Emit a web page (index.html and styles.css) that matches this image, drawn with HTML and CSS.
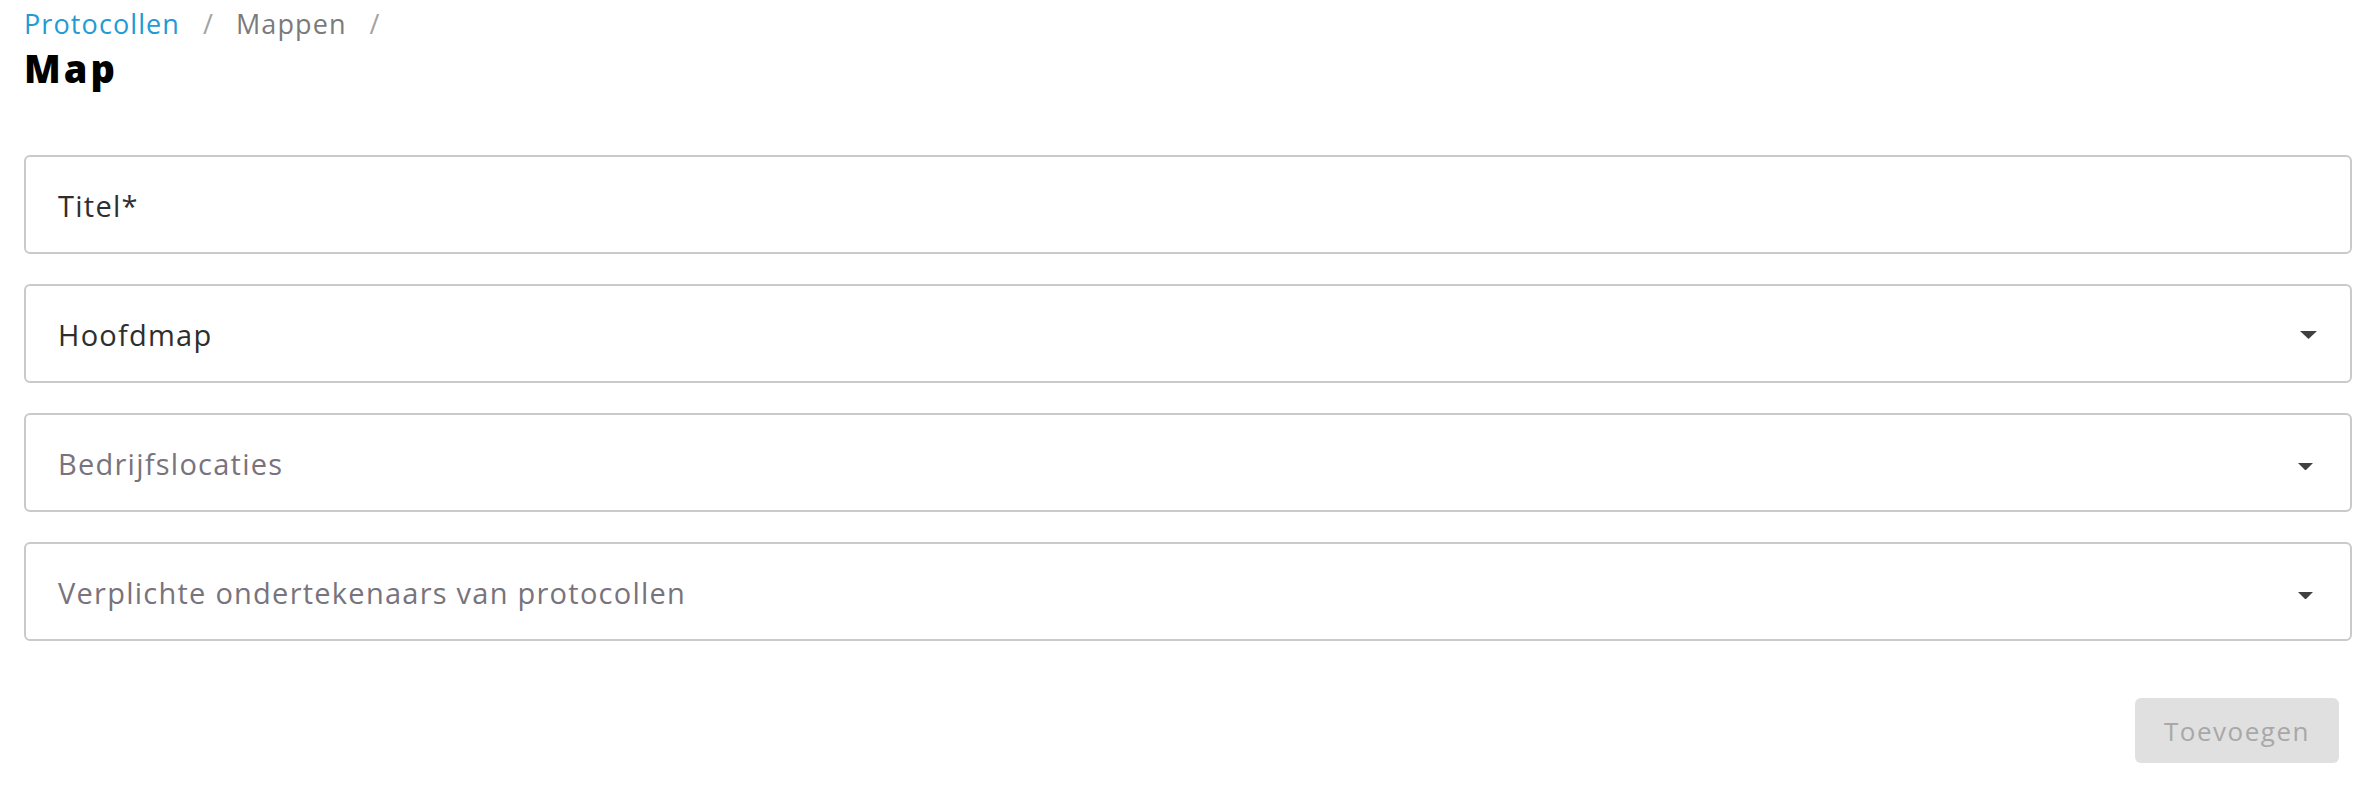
FILE: index.html
```html
<!DOCTYPE html>
<html lang="nl">
<head>
<meta charset="utf-8">
<title>Map</title>
<link rel="stylesheet" href="styles.css">
</head>
<body>
<div class="page">
  <nav class="crumbs">
    <a class="crumb-link" href="#">Protocollen</a>
    <span class="sep">/</span>
    <span class="crumb">Mappen</span>
    <span class="sep">/</span>
  </nav>
  <h1 class="title">Map</h1>
  <form class="form">
    <div class="field">
      <span class="value">Titel*</span>
    </div>
    <div class="field">
      <span class="value">Hoofdmap</span>
      <svg class="arrow arrow-lg" viewBox="0 0 17 8" aria-hidden="true"><path d="M0 0h17L8.5 8z"/></svg>
    </div>
    <div class="field">
      <span class="value placeholder">Bedrijfslocaties</span>
      <svg class="arrow arrow-sm" viewBox="0 0 15 7.5" aria-hidden="true"><path d="M0 0h15L7.5 7.5z"/></svg>
    </div>
    <div class="field">
      <span class="value placeholder">Verplichte ondertekenaars van protocollen</span>
      <svg class="arrow arrow-sm" viewBox="0 0 15 7.5" aria-hidden="true"><path d="M0 0h15L7.5 7.5z"/></svg>
    </div>
    <div class="actions">
      <button class="btn" type="button" disabled>Toevoegen</button>
    </div>
  </form>
</div>
</body>
</html>
```
FILE: styles.css
```css
html, body {
  margin: 0;
  padding: 0;
  background: #ffffff;
}

body {
  font-family: "Open Sans", "Noto Sans", sans-serif;
  color: #2e2e2e;
}

.page {
  padding: 6px 24px 0 24px;
}

.crumbs {
  display: flex;
  align-items: center;
  height: 36px;
  font-size: 27px;
  line-height: 36px;
  letter-spacing: 1.1px;
}

.crumb-link {
  color: #229bd5;
  text-decoration: none;
}

.crumb {
  color: #7b7b7b;
}

.sep {
  color: #a3a3a3;
  margin: 0 23px;
  letter-spacing: 0;
}

.title {
  margin: 4px 0 0 0;
  font-size: 38px;
  line-height: 44px;
  font-weight: 800;
  letter-spacing: 3px;
  color: #000000;
}

.form {
  display: flex;
  flex-direction: column;
  gap: 30px;
  margin-top: 65px;
}

.field {
  box-sizing: border-box;
  height: 99px;
  border: 2px solid #cacaca;
  border-radius: 6px;
  display: flex;
  align-items: center;
  justify-content: space-between;
  padding: 0 33px 0 32px;
}

.value {
  font-size: 29px;
  letter-spacing: 1.25px;
  color: #2e2e2e;
  padding-top: 1px;
}

.placeholder {
  color: #78737c;
}

.arrow {
  fill: #404040;
  flex: none;
}

.arrow-lg {
  width: 17px;
  height: 8px;
  margin-top: 3px;
}

.arrow-sm {
  width: 15px;
  height: 7.5px;
  margin-top: 8px;
  margin-right: 4px;
}

.actions {
  display: flex;
  justify-content: flex-end;
  padding-right: 13px;
  margin-top: 27px;
}

.btn {
  box-sizing: border-box;
  width: 204px;
  height: 65px;
  border: none;
  border-radius: 6px;
  background: #e0e0e0;
  color: #a8a8a8;
  font-family: "Open Sans", "Noto Sans", sans-serif;
  font-size: 26px;
  font-weight: 500;
  letter-spacing: 1.5px;
  padding: 0;
}
```
